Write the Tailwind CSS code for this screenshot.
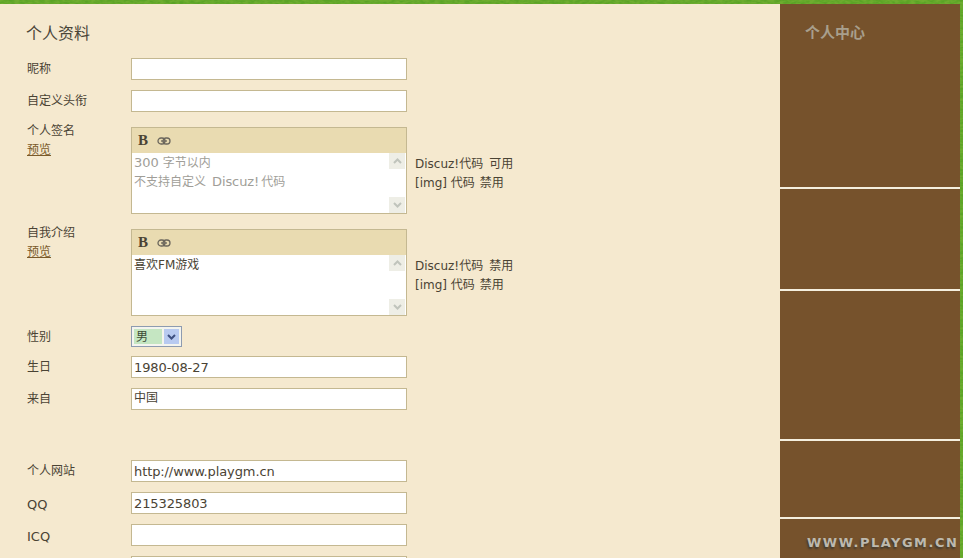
<!DOCTYPE html>
<html lang="zh-CN">
<head>
    <meta charset="UTF-8">
    <title>个人资料</title>
    <script src="https://cdn.jsdelivr.net/npm/@tailwindcss/browser@4"></script>
</head>
<body class="bg-[#4f8a14] font-['DejaVu_Sans','Noto_Sans_CJK_SC',sans-serif] text-[12px] text-[#4a4334]">
<div class="relative w-[963px] h-[558px] overflow-hidden">
    <!-- grass behind everything, only the edges show -->
    <svg class="absolute inset-0" width="963" height="558" aria-hidden="true">
        <filter id="grass"><feTurbulence type="fractalNoise" baseFrequency="0.2 0.45" numOctaves="2" seed="4"/><feColorMatrix values="0 0 0 0 0.16  0 0 0 0 0.42  0 0 0 0 0.03  2.2 0 0 0 -0.6"/></filter>
        <rect width="963" height="558" fill="#5aa326"/>
        <rect width="963" height="558" filter="url(#grass)"/>
    </svg>

    <div class="relative flex h-full pt-[4px] pr-[3px]">
        <main class="w-[780px] bg-[#f5e9cf] pl-[27px] overflow-hidden">
            <h1 class="-ml-[1px] mt-[20px] h-[34px] text-[16px] leading-[20px] font-normal text-[#4a4538]">个人资料</h1>

            <div class="flex h-[22px] items-center"><span class="w-[104px]">昵称</span><div class="w-[276px] h-[22px] bg-white border border-[#c4b891]"></div></div>
            <div class="flex h-[22px] items-center mt-[10px]"><span class="w-[104px]">自定义头衔</span><div class="w-[276px] h-[22px] bg-white border border-[#c4b891]"></div></div>

            <div class="flex mt-[15px] h-[87px]">
                <div class="w-[104px] -mt-[5px] leading-[19px]">个人签名<br><a class="underline text-[#7a5a2a]">预览</a></div>
                <div class="w-[276px] h-[87px] border border-[#c4b891] bg-white flex flex-col">
                    <div class="h-[25px] bg-[#e9dbb1] flex items-center pl-[6px] gap-[9px]">
                        <span class="font-['Liberation_Serif',serif] font-bold text-[15px] leading-none text-[#4a4334]">B</span>
                        <svg width="14" height="10" viewBox="0 0 14 10" fill="none" stroke="#6a655b" stroke-width="1.3"><rect x="1" y="2" width="7" height="6" rx="3"/><rect x="6" y="2" width="7" height="6" rx="3"/><path d="M4 5h6"/></svg>
                    </div>
                    <div class="flex-1 flex">
                        <div class="flex-1 pl-[2px] pt-[1px] leading-[19px] text-[#a09e98]"><div class="h-[19px]"><span class="text-[13px] leading-none">300</span> 字节以内</div><div class="h-[19px]">不支持自定义<span class="ml-[6px] text-[13px] leading-none tracking-[-0.1px]">Discuz!</span><span class="ml-[2px]">代码</span></div></div>
                        <div class="w-[16px] mr-[1px] flex flex-col justify-between">
                            <div class="h-[16px] bg-[#eeeee6] flex items-center justify-center"><svg width="9" height="6" viewBox="0 0 9 6" fill="none" stroke="#c0c4bc" stroke-width="2"><path d="M1 5l3.5-3.5L8 5"/></svg></div>
                            <div class="h-[16px] bg-[#eeeee6] flex items-center justify-center"><svg width="9" height="6" viewBox="0 0 9 6" fill="none" stroke="#c0c4bc" stroke-width="2"><path d="M1 1l3.5 3.5L8 1"/></svg></div>
                        </div>
                    </div>
                </div>
                <div class="ml-[8px] mt-[28px] leading-[19px]"><div>Discuz!代码<span class="ml-[6px]">可用</span></div><div>[img] 代码<span class="ml-[5px]">禁用</span></div></div>
            </div>

            <div class="flex mt-[15px] h-[87px]">
                <div class="w-[104px] -mt-[5px] leading-[19px]">自我介绍<br><a class="underline text-[#7a5a2a]">预览</a></div>
                <div class="w-[276px] h-[87px] border border-[#c4b891] bg-white flex flex-col">
                    <div class="h-[25px] bg-[#e9dbb1] flex items-center pl-[6px] gap-[9px]">
                        <span class="font-['Liberation_Serif',serif] font-bold text-[15px] leading-none text-[#4a4334]">B</span>
                        <svg width="14" height="10" viewBox="0 0 14 10" fill="none" stroke="#6a655b" stroke-width="1.3"><rect x="1" y="2" width="7" height="6" rx="3"/><rect x="6" y="2" width="7" height="6" rx="3"/><path d="M4 5h6"/></svg>
                    </div>
                    <div class="flex-1 flex">
                        <div class="flex-1 pl-[2px] pt-[1px] leading-[19px]">喜欢FM游戏</div>
                        <div class="w-[16px] mr-[1px] flex flex-col justify-between">
                            <div class="h-[16px] bg-[#eeeee6] flex items-center justify-center"><svg width="9" height="6" viewBox="0 0 9 6" fill="none" stroke="#c0c4bc" stroke-width="2"><path d="M1 5l3.5-3.5L8 5"/></svg></div>
                            <div class="h-[16px] bg-[#eeeee6] flex items-center justify-center"><svg width="9" height="6" viewBox="0 0 9 6" fill="none" stroke="#c0c4bc" stroke-width="2"><path d="M1 1l3.5 3.5L8 1"/></svg></div>
                        </div>
                    </div>
                </div>
                <div class="ml-[8px] mt-[28px] leading-[19px]"><div>Discuz!代码<span class="ml-[6px]">禁用</span></div><div>[img] 代码<span class="ml-[5px]">禁用</span></div></div>
            </div>

            <div class="flex h-[21px] items-center mt-[10px]">
                <span class="w-[104px]">性别</span>
                <div class="w-[51px] h-[21px] border border-[#8d9bb0] bg-[#f4f4ee] p-[2px] flex justify-between">
                    <span class="w-[28px] bg-[#c5e6c2] pl-[2px] leading-[16px] text-[#3b4a34]">男</span>
                    <span class="w-[15px] bg-[#b8caf0] flex items-center justify-center"><svg width="9" height="6" viewBox="0 0 9 6" fill="none" stroke="#3d4f80" stroke-width="2"><path d="M1 1l3.5 3.5L8 1"/></svg></span>
                </div>
            </div>

            <div class="flex h-[22px] items-center mt-[9px]"><span class="w-[104px]">生日</span><div class="w-[276px] h-[22px] bg-white border border-[#c4b891] px-[2px] leading-[21px] text-[13px] tracking-[-0.1px]">1980-08-27</div></div>
            <div class="flex h-[22px] items-center mt-[10px]"><span class="w-[104px]">来自</span><div class="w-[276px] h-[22px] bg-white border border-[#c4b891] px-[2px] leading-[19px]">中国</div></div>

            <div class="flex h-[22px] items-center mt-[50px]"><span class="w-[104px]">个人网站</span><div class="w-[276px] h-[22px] bg-white border border-[#c4b891] px-[2px] leading-[21px] text-[13px] tracking-[-0.1px]">http://www.playgm.cn</div></div>
            <div class="flex h-[22px] items-center mt-[10px]"><span class="w-[104px] pt-[4px] text-[13px]">QQ</span><div class="w-[276px] h-[22px] bg-white border border-[#c4b891] px-[2px] leading-[21px] text-[13px] tracking-[-0.1px]">215325803</div></div>
            <div class="flex h-[22px] items-center mt-[10px]"><span class="w-[104px] pt-[4px] text-[13px]">ICQ</span><div class="w-[276px] h-[22px] bg-white border border-[#c4b891]"></div></div>
            <div class="ml-[104px] mt-[10px] w-[276px] h-[22px] bg-white border border-[#c4b891]"></div>
        </main>

        <aside class="w-[180px] flex flex-col bg-[#76522c]">
            <div class="h-[183px] pl-[25px] pt-[19px] text-[15px] leading-[20px] font-bold text-[#a89f8c]">个人中心</div>
            <div class="h-[2px] bg-[#f5efdf]"></div>
            <div class="h-[100px]"></div>
            <div class="h-[2px] bg-[#f5efdf]"></div>
            <div class="h-[148px]"></div>
            <div class="h-[2px] bg-[#f5efdf]"></div>
            <div class="h-[76px]"></div>
            <div class="h-[2px] bg-[#f5efdf]"></div>
        </aside>
    </div>

    <!-- site watermark stamped over the corner -->
    <div class="absolute left-[807px] top-[535px] font-['DejaVu_Sans',sans-serif] font-bold text-[13px] leading-[16px] tracking-[1.5px] text-[#bdb9ae] [text-shadow:-1px_2px_2px_#3f3a30] whitespace-nowrap">WWW.PLAYGM.CN</div>
</div>
</body>
</html>
